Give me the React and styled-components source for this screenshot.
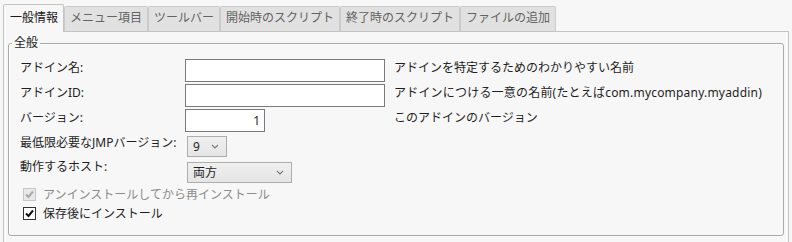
import React from "react";
import styled, { createGlobalStyle } from "styled-components";

const GlobalStyle = createGlobalStyle`
  body {
    margin: 0;
    background: #f7f7f7;
    font-family: "Noto Sans", "Noto Sans CJK JP", sans-serif;
    font-size: 12px;
    color: #1e1e1e;
  }
  * { box-sizing: border-box; }
`;

const tabs = [
  "一般情報",
  "メニュー項目",
  "ツールバー",
  "開始時のスクリプト",
  "終了時のスクリプト",
  "ファイルの追加",
];

const Chevron = () => (
  <svg width="8" height="5" viewBox="0 0 8 5">
    <path d="M1 1 L4 4 L7 1" fill="none" stroke="#7a7a7a" strokeWidth="1.1" />
  </svg>
);

const Check = ({ color }) => (
  <svg width="11" height="11" viewBox="0 0 11 11">
    <path d="M2 5.5 L4.5 8 L9 2.5" fill="none" stroke={color} strokeWidth="2" />
  </svg>
);

const App = () => {
  return (
    <Page>
      <GlobalStyle />
      <TabBar>
        {tabs.map((t, i) => (
          <Tab key={`tab-${i}`} $active={i === 0}>
            {t}
          </Tab>
        ))}
      </TabBar>
      <Panel>
        <Group>
          <Legend>全般</Legend>
          <GroupBody>
            <Form>
              <Label>アドイン名:</Label>
              <TextInput $w={200} />
              <Desc>アドインを特定するためのわかりやすい名前</Desc>

              <Label>アドインID:</Label>
              <TextInput $w={200} />
              <Desc $latin>アドインにつける一意の名前(たとえばcom.mycompany.myaddin)</Desc>

              <Label>バージョン:</Label>
              <TextInput $w={80} $right defaultValue="1" />
              <Desc>このアドインのバージョン</Desc>

              <Label $flat>最低限必要なJMPバージョン:</Label>
              <Select $w={40} $top={1} $left={2}>
                <span>9</span>
                <Chevron />
              </Select>
              <span />

              <Label $flat>動作するホスト:</Label>
              <Select $w={105} $top={3} $left={2}>
                <span>両方</span>
                <Chevron />
              </Select>
              <span />
            </Form>
            <CheckRow $disabled>
              <Box $disabled>
                <Check color="#a8a8a8" />
              </Box>
              アンインストールしてから再インストール
            </CheckRow>
            <CheckRow>
              <Box>
                <Check color="#111" />
              </Box>
              保存後にインストール
            </CheckRow>
          </GroupBody>
        </Group>
      </Panel>
    </Page>
  );
};

const Page = styled.div`
  width: 792px;
  height: 242px;
  overflow: hidden;
  padding: 4px 3px 0 3px;
`;

const TabBar = styled.div`
  display: flex;
  align-items: flex-end;
  height: 27px;
`;

const Tab = styled.div`
  position: relative;
  z-index: 1;
  height: ${(p) => (p.$active ? "28px" : "25px")};
  margin-bottom: ${(p) => (p.$active ? "-1px" : "0")};
  padding: ${(p) => (p.$active ? "5px 5px 0 6px" : "3px 5px 0 5px")};
  line-height: 16px;
  font-size: 12px;
  white-space: nowrap;
  color: ${(p) => (p.$active ? "#1a1a1a" : "#636363")};
  background: ${(p) => (p.$active ? "#f7f7f7" : "#e1e1e1")};
  border: 1px solid ${(p) => (p.$active ? "#c4c4c4" : "#cbcbcb")};
  border-bottom: none;
  border-radius: 2px 2px 0 0;
`;

const Panel = styled.div`
  width: 786px;
  height: 240px;
  border: 1px solid #c3c3c3;
  padding: 3px 4px 0 4px;
`;

const Group = styled.fieldset`
  margin: 0;
  min-width: 0;
  padding: 0 0 12px 0;
  border: 1px solid #a9a9a9;
  border-radius: 3px;
  box-shadow: inset 1px 1px 0 #ffffff;
`;

const Legend = styled.legend`
  margin-left: 3px;
  padding: 0 2px;
  line-height: 16px;
  font-size: 12px;
  color: #1e1e1e;
`;

const GroupBody = styled.div`
  padding: 8px 0 0 11px;
`;

const Form = styled.div`
  display: grid;
  grid-template-columns: 156px 200px 1fr;
  grid-template-rows: 25px 25px 26px 24px 26px;
  column-gap: 9px;
  align-items: start;
`;

const Label = styled.div`
  line-height: 16px;
  padding-top: ${(p) => (p.$flat ? "0" : "1px")};
  color: #1e1e1e;
  white-space: nowrap;
`;

const Desc = styled.div`
  line-height: 16px;
  padding-top: 1px;
  color: #1e1e1e;
  white-space: nowrap;
  letter-spacing: ${(p) => (p.$latin ? "0.2px" : "0")};
`;

const TextInput = styled.input`
  width: ${(p) => p.$w}px;
  height: 23px;
  border: 1px solid #7a7a7a;
  background: #ffffff;
  padding: 0 ${(p) => (p.$right ? "4px" : "3px")};
  text-align: ${(p) => (p.$right ? "right" : "left")};
  font-family: "Noto Sans", "Noto Sans CJK JP", sans-serif;
  font-size: 12px;
  color: #1e1e1e;
  outline: none;
`;

const Select = styled.div`
  width: ${(p) => p.$w}px;
  height: 21px;
  margin-top: ${(p) => p.$top}px;
  margin-left: ${(p) => p.$left}px;
  display: flex;
  align-items: center;
  justify-content: space-between;
  padding: 0 7px 0 5px;
  border: 1px solid #adadad;
  background: linear-gradient(#f0f0f0, #e5e5e5);
  color: #1e1e1e;
  line-height: 16px;

  svg {
    flex: none;
  }
`;

const CheckRow = styled.div`
  display: flex;
  align-items: center;
  gap: 7px;
  height: 19px;
  margin-left: 3px;
  line-height: 16px;
  color: ${(p) => (p.$disabled ? "#8c8c8c" : "#1e1e1e")};

  &:first-of-type {
    margin-top: 4px;
  }
`;

const Box = styled.div`
  width: 13px;
  height: 13px;
  display: flex;
  align-items: center;
  justify-content: center;
  border: 1px solid ${(p) => (p.$disabled ? "#c6c6c6" : "#333333")};
  background: ${(p) => (p.$disabled ? "#e8e8e8" : "#ffffff")};
`;

export default App;
